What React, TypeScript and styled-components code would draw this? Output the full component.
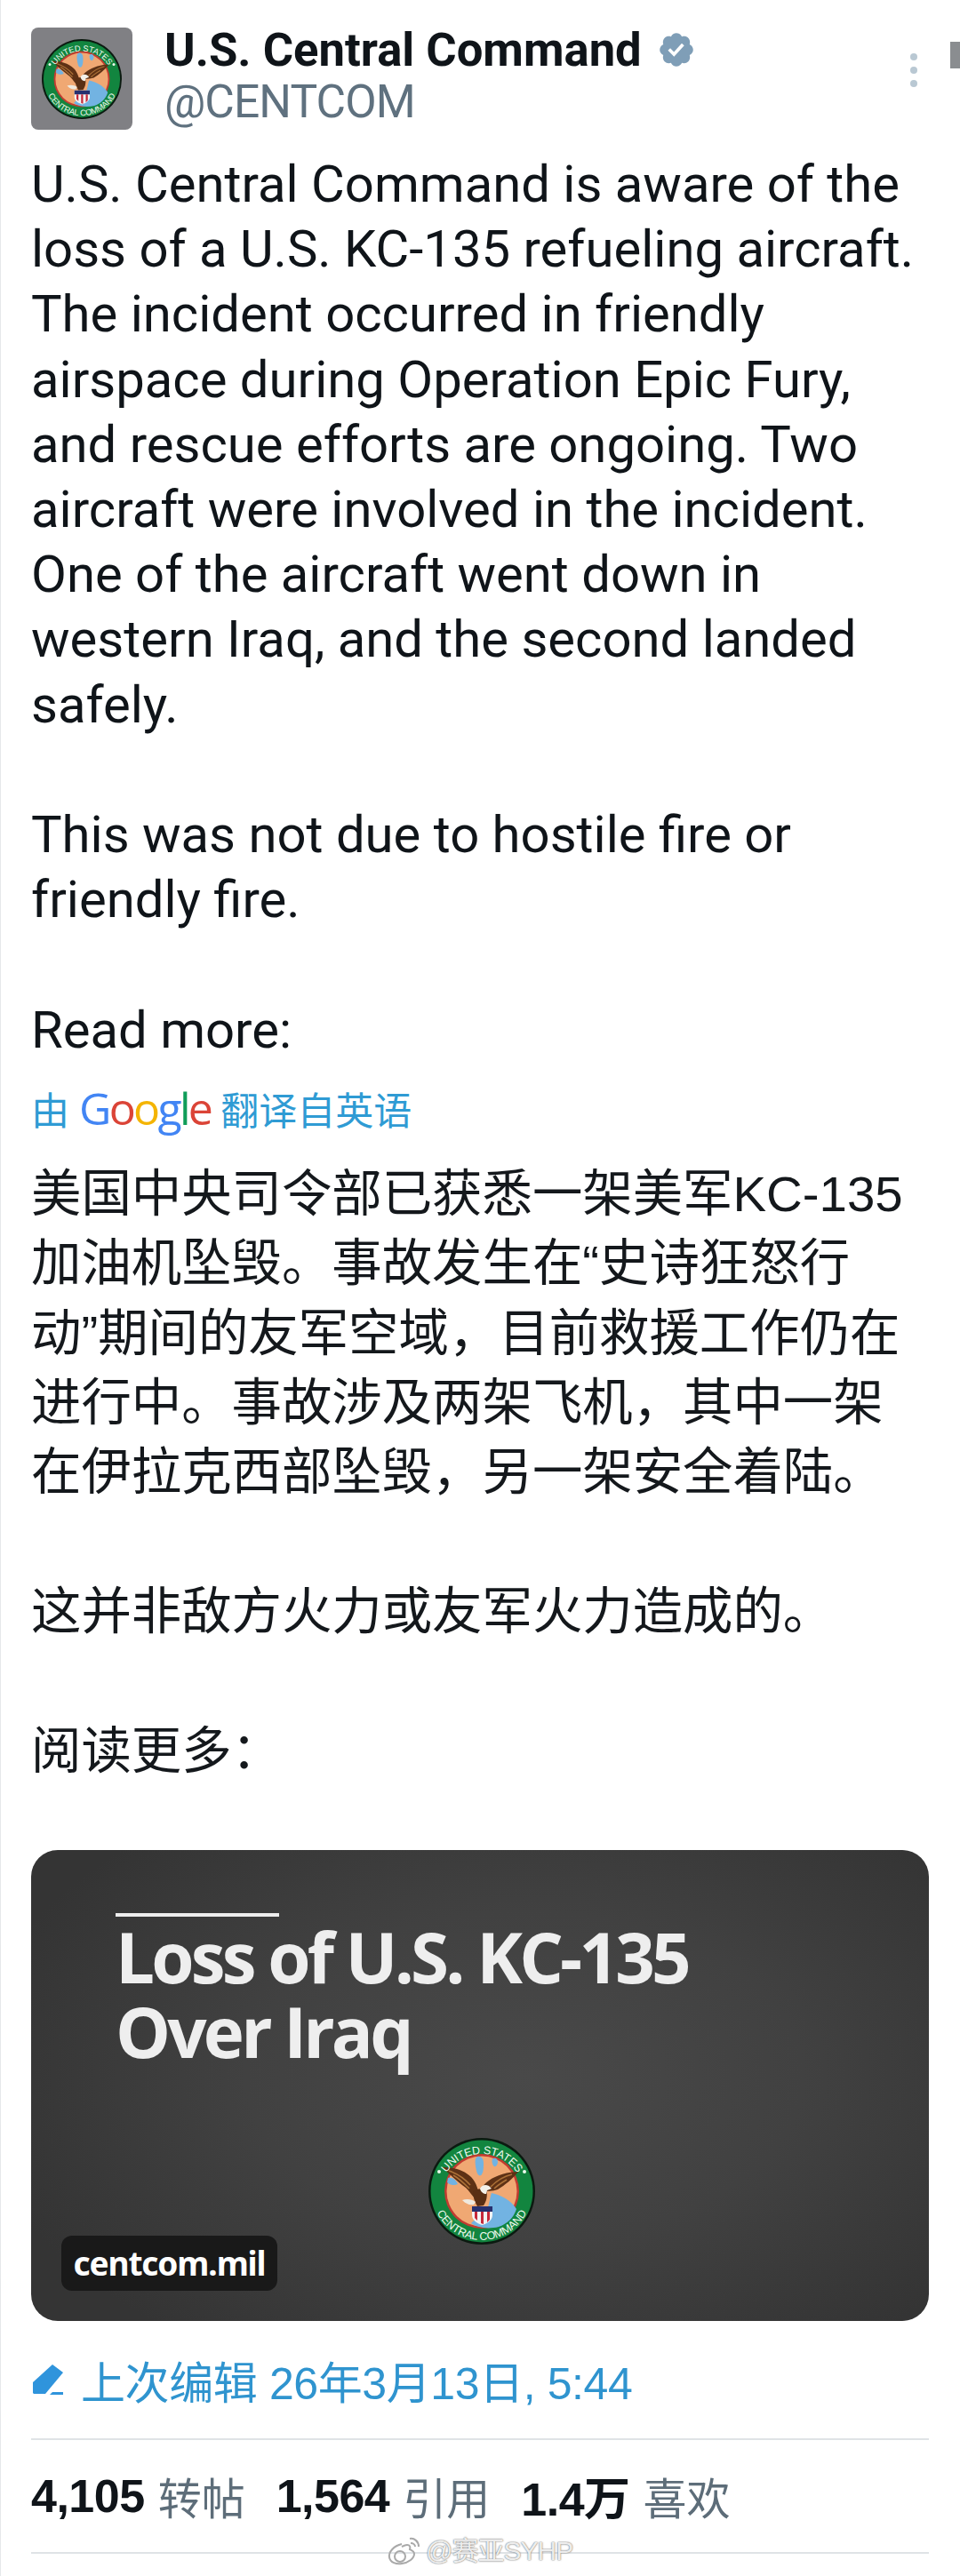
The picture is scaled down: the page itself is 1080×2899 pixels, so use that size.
import React from "react";
import styled, { createGlobalStyle } from "styled-components";

const Global = createGlobalStyle`
  html, body { margin: 0; padding: 0; background: #fff; }
  #root { width: 1080px; }
`;

const Page = styled.div`
  position: relative;
  width: 1080px;
  height: 2899px;
  overflow: hidden;
  box-sizing: border-box;
  padding: 30px 35px 0;
  background: #fff;
  box-shadow: inset 1px 0 0 #e6e8ea;
  color: #0f1419;
  font-family: Roboto, "Noto Sans CJK SC", sans-serif;
`;

const Header = styled.header`
  position: relative;
  display: flex;
  align-items: flex-start;
  gap: 36px;
  height: 116px;
`;

const Avatar = styled.div`
  flex: none;
  width: 114px;
  height: 115px;
  margin-top: 1px;
  border-radius: 8px;
  background: #808084;
  display: flex;
  align-items: center;
  justify-content: center;
`;

const Names = styled.div`
  display: flex;
  flex-direction: column;
`;

const NameRow = styled.div`
  display: flex;
  align-items: center;
  gap: 17px;
  height: 52px;
`;

const Name = styled.span`
  font-size: 52.6px;
  font-weight: 700;
  line-height: 52px;
  color: #0f1419;
`;

const Handle = styled.span`
  margin-top: 5px;
  font-size: 51.5px;
  line-height: 56px;
  letter-spacing: -0.9px;
  color: #5f717f;
`;

const Dots = styled.div`
  position: absolute;
  right: 13px;
  top: 30px;
  display: flex;
  flex-direction: column;
  gap: 7px;
`;

const Dot = styled.i`
  display: block;
  width: 8px;
  height: 8px;
  border-radius: 50%;
  background: #b9c8d3;
`;

const ScrollThumb = styled.div`
  position: absolute;
  right: 0;
  top: 47px;
  width: 11px;
  height: 30px;
  background: #8a8d90;
`;

const English = styled.p`
  margin: 25px 0 0;
  font-size: 58px;
  line-height: 73.2px;
  white-space: pre-line;
  color: #0f1419;
`;

const TranslatedBy = styled.div`
  margin-top: 23px;
  display: flex;
  align-items: center;
  height: 56px;
  font-size: 43px;
  color: #2f9bd4;
  gap: 11px;
`;

const GoogleWord = styled.span`
  font-family: "Open Sans", Roboto, sans-serif;
  font-size: 50px;
  letter-spacing: -2.7px;
  font-weight: 500;
  line-height: 56px;
`;

const GLetter = styled.span<{ $c: string }>`
  color: ${(p) => p.$c};
`;

const Chinese = styled.p`
  margin: 30px 0 0;
  font-family: "Liberation Sans", "Noto Sans CJK SC", sans-serif;
  font-size: 56.4px;
  line-height: 78.4px;
  white-space: pre-line;
  color: #14181c;
`;

const Card = styled.div`
  position: relative;
  margin-top: 71px;
  height: 530px;
  width: 1010px;
  border-radius: 30px;
  background: radial-gradient(ellipse 62% 70% at 55% 48%, #494949 0%, #414141 50%, #343434 100%);
  padding: 71px 0 0 95px;
  box-sizing: border-box;
  overflow: hidden;
`;

const Rule = styled.div`
  width: 184px;
  height: 4px;
  background: #eeeeee;
`;

const CardTitle = styled.h2`
  margin: 3px 0 0;
  font-family: "Open Sans", sans-serif;
  font-size: 78px;
  font-weight: 700;
  line-height: 84px;
  letter-spacing: -3.8px;
  color: #eeeeee;
  white-space: pre-line;
`;

const CardLogo = styled.div`
  position: absolute;
  left: 447px;
  top: 324px;
`;

const DomainTag = styled.div`
  position: absolute;
  left: 34px;
  bottom: 34px;
  width: 243px;
  height: 62px;
  border-radius: 12px;
  background: #191919;
  color: #fff;
  font-family: "Noto Sans", sans-serif;
  font-weight: 700;
  font-size: 37px;
  letter-spacing: -1.1px;
  display: flex;
  align-items: center;
  justify-content: center;
`;

const EditRow = styled.div`
  margin-top: 41px;
  height: 50px;
  display: flex;
  align-items: center;
  gap: 18px;
  font-family: "Liberation Sans", "Noto Sans CJK SC", sans-serif;
  font-size: 50px;
  letter-spacing: -0.4px;
  color: #2f94cf;
`;

const Divider = styled.div`
  height: 2px;
  background: #dfe3e6;
`;

const EditDivider = styled(Divider)`
  margin-top: 41px;
`;

const Stats = styled.div`
  height: 126px;
  display: flex;
  align-items: center;
  gap: 35px;
  font-family: "Liberation Sans", "Noto Sans CJK SC", sans-serif;
`;

const Stat = styled.div`
  display: flex;
  align-items: center;
  gap: 15px;
`;

const StatValue = styled.b`
  font-size: 52px;
  font-weight: 700;
  letter-spacing: -0.5px;
  color: #0f1419;
`;

const StatLabel = styled.span`
  font-size: 49px;
  color: #5d6d79;
`;

const Watermark = styled.div`
  position: absolute;
  left: 435px;
  top: 2853px;
  display: flex;
  align-items: center;
  gap: 4px;
  font-family: "Liberation Sans", "Noto Sans CJK SC", sans-serif;
  font-size: 30px;
  line-height: 36px;
  letter-spacing: -1px;
  color: rgba(255, 255, 255, 0.9);
  text-shadow: 0 0 2px rgba(90, 90, 90, 0.75), 0 0 1px rgba(90, 90, 90, 0.75);
`;

let uid = 0;
function Emblem({ size }: { size: number }) {
  const id = React.useMemo(() => `e${uid++}`, []);
  return (
    <svg width={size} height={size} viewBox="0 0 120 120">
      <defs>
        <path id={`${id}t`} d="M 12 66 A 48 48 0 0 1 108 66" />
        <path id={`${id}b`} d="M 3 58 A 57 57 0 0 0 117 58" />
      </defs>
      <circle cx="60" cy="60" r="60" fill="#0b1a10" />
      <circle cx="60" cy="60" r="57.500" fill="#12853f" />
      <circle cx="60" cy="60" r="42" fill="#c23b30" />
      <circle cx="60" cy="60" r="39.500" fill="#f0a873" />
      <path d="M55 21c4-1 7 2 7 7s0 10-2 13-5 1-6-4-3-14 1-16zM73 23c3-1 5 1 5 4s-2 6-4 5-4-8-1-9zM22 45c5-1 9 2 11 7-4 2-9 1-12-2zM71 62c10 2 22 8 28 18-3 10-11 17-20 20-12 3-24 1-31-4 4-5 14-8 18-16 3-6 3-13 5-18z" fill="#72b3e2" />
      <path d="M16 33c12 0 24 3 32 11 6 6 9 16 10 28-6-2-10-10-16-16-8-6-18-14-26-23z" fill="#5e3115" />
      <path d="M23 37c9 3 17 8 24 16M28 42c7 4 12 9 18 15" stroke="#ad7238" strokeWidth="1.6" fill="none" />
      <path d="M101 38c-11 0-25 4-33 10-6 4-8 8-9 12 7 0 13 0 19-2 8-5 17-12 23-20z" fill="#5e3115" />
      <path d="M94 41c-9 2-17 7-24 14M88 47c-5 3-10 6-14 10" stroke="#ad7238" strokeWidth="1.6" fill="none" />
      <path d="M50 60c3-3 12-4 15-1 2 5 0 13-3 17l-7 1c-3-5-5-11-5-17z" fill="#5a2f14" />
      <path d="M58 57c2-4 6-5 10-3l3 3-5 2-1 4c-3 0-6-2-7-6z" fill="#f4f1ea" />
      <path d="M38 70c5-2 11-1 15 2l-2 3c-5 1-9-1-13-5z" fill="#efe9df" />
      <path d="M49 77h23v10c0 5-5 9-11.500 11-6.500-2-11.500-6-11.500-11z" fill="#f3f3f3" />
      <path d="M49 77h23v6h-23z" fill="#27306f" />
      <path d="M52 83h3v10l-3-3zM59 83h3v14l-3-1zM66 83h3v9l-3 3z" fill="#c6283a" />
      <g fill="#eef9ee" fontFamily="'Liberation Sans', sans-serif" fontSize="12.500" letterSpacing="-0.2">
        <text>
          <textPath href={`#${id}t`} startOffset="50%" textAnchor="middle">UNITED STATES</textPath>
        </text>
        <text>
          <textPath href={`#${id}b`} startOffset="50%" textAnchor="middle">CENTRAL COMMAND</textPath>
        </text>
      </g>
      <circle cx="12" cy="38" r="2" fill="#eef9ee" />
      <circle cx="108" cy="38" r="2" fill="#eef9ee" />
    </svg>
  );
}

const VERIFIED =
  "M22.25 12c0-1.43-.88-2.67-2.19-3.34.46-1.39.2-2.9-.81-3.91s-2.52-1.27-3.91-.81c-.66-1.31-1.91-2.19-3.34-2.19s-2.67.88-3.33 2.19c-1.4-.46-2.91-.2-3.92.81s-1.26 2.52-.8 3.91c-1.31.67-2.2 1.91-2.2 3.34s.89 2.67 2.2 3.34c-.46 1.39-.21 2.9.8 3.91s2.52 1.26 3.91.81c.67 1.31 1.91 2.19 3.34 2.19s2.68-.88 3.34-2.19c1.39.45 2.9.2 3.91-.81s1.27-2.52.81-3.91c1.31-.67 2.19-1.91 2.19-3.34zm-11.71 4.2L6.8 12.46l1.41-1.42 2.26 2.26 4.8-5.23 1.47 1.36-6.2 6.77z";

const EN_TEXT = `U.S. Central Command is aware of the
loss of a U.S. KC-135 refueling aircraft.
The incident occurred in friendly
airspace during Operation Epic Fury,
and rescue efforts are ongoing. Two
aircraft were involved in the incident.
One of the aircraft went down in
western Iraq, and the second landed
safely.

This was not due to hostile fire or
friendly fire.

Read more:`;

const ZH_TEXT = `美国中央司令部已获悉一架美军KC-135
加油机坠毁。事故发生在“史诗狂怒行
动”期间的友军空域，目前救援工作仍在
进行中。事故涉及两架飞机，其中一架
在伊拉克西部坠毁，另一架安全着陆。

这并非敌方火力或友军火力造成的。

阅读更多：`;

export default function App() {
  return (
    <Page>
      <Global />
      <Header>
        <Avatar>
          <Emblem size={90} />
        </Avatar>
        <Names>
          <NameRow>
            <Name>U.S. Central Command</Name>
            <svg width="44" height="44" viewBox="0 0 24 24">
              <path d={VERIFIED} fill="#7f9eb7" />
            </svg>
          </NameRow>
          <Handle>@CENTCOM</Handle>
        </Names>
        <Dots>
          <Dot />
          <Dot />
          <Dot />
        </Dots>
      </Header>
      <ScrollThumb />
      <English>{EN_TEXT}</English>
      <TranslatedBy>
        <span>由</span>
        <GoogleWord>
          <GLetter $c="#4285f4">G</GLetter>
          <GLetter $c="#db4437">o</GLetter>
          <GLetter $c="#f4b400">o</GLetter>
          <GLetter $c="#4285f4">g</GLetter>
          <GLetter $c="#0f9d58">l</GLetter>
          <GLetter $c="#db4437">e</GLetter>
        </GoogleWord>
        <span>翻译自英语</span>
      </TranslatedBy>
      <Chinese>{ZH_TEXT}</Chinese>
      <Card>
        <Rule />
        <CardTitle>{"Loss of U.S. KC-135\nOver Iraq"}</CardTitle>
        <CardLogo>
          <Emblem size={120} />
        </CardLogo>
        <DomainTag>centcom.mil</DomainTag>
      </Card>
      <EditRow>
        <svg width="38" height="38" viewBox="0 0 38 38">
          <path d="M24 2l12 9-20 24H3l-1-1V22z" fill="#2f94dc" />
          <path d="M24 33h12v3H21z" fill="#2f94dc" />
        </svg>
        <span>上次编辑 26年3月13日, 5:44</span>
      </EditRow>
      <EditDivider />
      <Stats>
        <Stat>
          <StatValue>4,105</StatValue>
          <StatLabel>转帖</StatLabel>
        </Stat>
        <Stat>
          <StatValue>1,564</StatValue>
          <StatLabel>引用</StatLabel>
        </Stat>
        <Stat>
          <StatValue>1.4万</StatValue>
          <StatLabel>喜欢</StatLabel>
        </Stat>
      </Stats>
      <Divider />
      <Watermark>
        <svg width="40" height="34" viewBox="0 0 40 34" fill="none" stroke="#a9a9a9" strokeWidth="2">
          <path d="M17 9C8 11 2 18 3 24c1 6 8 8 14 7 8-1 14-6 14-11 0-3-3-4-5-5 1-3 0-5-3-5-2 0-4 1-6 2" />
          <circle cx="15" cy="23" r="6" />
          <path d="M26 3c5-1 10 3 10 9M27 8c3 0 5 2 5 4" />
        </svg>
        <span>@赛亚SYHP</span>
      </Watermark>
    </Page>
  );
}
